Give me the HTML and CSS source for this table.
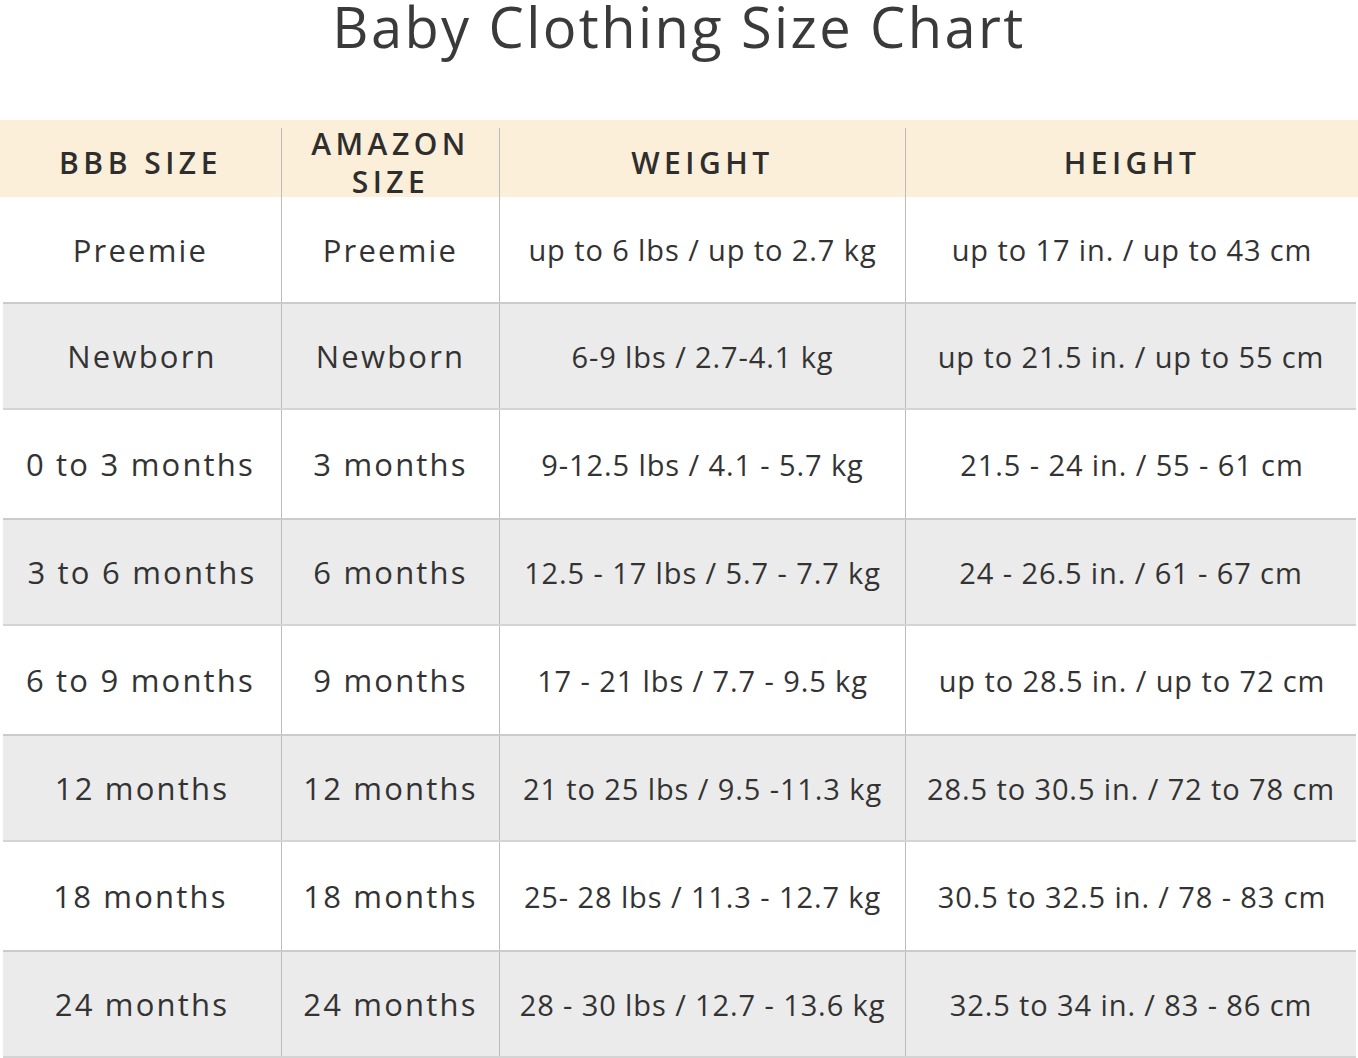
FILE: index.html
```html
<!DOCTYPE html>
<html lang="en">
<head>
<meta charset="utf-8">
<title>Baby Clothing Size Chart</title>
<link rel="stylesheet" href="styles.css">
</head>
<body>
<div class="page">
  <h1 class="title">Baby Clothing Size Chart</h1>
  <div class="chart">
    <div class="row head">
      <div class="cell c1">BBB SIZE</div>
      <div class="cell c2">AMAZON<br>SIZE</div>
      <div class="cell c3">WEIGHT</div>
      <div class="cell c4">HEIGHT</div>
    </div>
    <div class="row first">
      <div class="cell c1 size">Preemie</div>
      <div class="cell c2 size">Preemie</div>
      <div class="cell c3">up to 6 lbs / up to 2.7 kg</div>
      <div class="cell c4">up to 17 in. / up to 43 cm</div>
    </div>
    <div class="row alt">
      <div class="cell c1 size">Newborn</div>
      <div class="cell c2 size">Newborn</div>
      <div class="cell c3">6-9 lbs / 2.7-4.1 kg</div>
      <div class="cell c4">up to 21.5 in. / up to 55 cm</div>
    </div>
    <div class="row">
      <div class="cell c1 size">0 to 3 months</div>
      <div class="cell c2 size">3 months</div>
      <div class="cell c3">9-12.5 lbs / 4.1 - 5.7 kg</div>
      <div class="cell c4">21.5 - 24 in. / 55 - 61 cm</div>
    </div>
    <div class="row alt">
      <div class="cell c1 size">3 to 6 months</div>
      <div class="cell c2 size">6 months</div>
      <div class="cell c3">12.5 - 17 lbs / 5.7 - 7.7 kg</div>
      <div class="cell c4">24 - 26.5 in. / 61 - 67 cm</div>
    </div>
    <div class="row">
      <div class="cell c1 size">6 to 9 months</div>
      <div class="cell c2 size">9 months</div>
      <div class="cell c3">17 - 21 lbs / 7.7 - 9.5 kg</div>
      <div class="cell c4">up to 28.5 in. / up to 72 cm</div>
    </div>
    <div class="row alt">
      <div class="cell c1 size">12 months</div>
      <div class="cell c2 size">12 months</div>
      <div class="cell c3">21 to 25 lbs / 9.5 -11.3 kg</div>
      <div class="cell c4">28.5 to 30.5 in. / 72 to 78 cm</div>
    </div>
    <div class="row">
      <div class="cell c1 size">18 months</div>
      <div class="cell c2 size">18 months</div>
      <div class="cell c3">25- 28 lbs / 11.3 - 12.7 kg</div>
      <div class="cell c4">30.5 to 32.5 in. / 78 - 83 cm</div>
    </div>
    <div class="row alt">
      <div class="cell c1 size">24 months</div>
      <div class="cell c2 size">24 months</div>
      <div class="cell c3">28 - 30 lbs / 12.7 - 13.6 kg</div>
      <div class="cell c4">32.5 to 34 in. / 83 - 86 cm</div>
    </div>
  </div>
</div>
</body>
</html>
```
FILE: styles.css
```css
html, body {
  margin: 0;
  padding: 0;
  background: #ffffff;
}

.page {
  width: 1358px;
  height: 1058px;
  overflow: hidden;
  font-family: "Open Sans", "Liberation Sans", sans-serif;
  color: #333333;
}

.title {
  margin: 0;
  height: 120px;
  box-sizing: border-box;
  padding-top: 4px;
  text-align: center;
  font-size: 56px;
  line-height: 44px;
  font-weight: 400;
  color: #3a3a3a;
  letter-spacing: 2.4px;
}

.chart {
  display: flex;
  flex-direction: column;
}

.row {
  display: grid;
  grid-template-columns: 281px 218px 406px 453px;
  grid-template-rows: 100%;
  height: 108px;
  box-sizing: border-box;
}

.row.first {
  height: 105px;
}

.row.alt {
  background: #ebebeb;
  border-top: 2px solid #cbcbcb;
  border-bottom: 2px solid #d4d4d4;
  margin: 0 2px 0 3px;
  grid-template-columns: 278px 218px 406px 451px;
}

.cell {
  display: flex;
  align-items: center;
  justify-content: center;
  text-align: center;
  font-size: 29px;
  font-weight: 400;
  letter-spacing: 0.9px;
  color: #333333;
  white-space: nowrap;
}

.cell.size {
  font-size: 31px;
  font-weight: 500;
  letter-spacing: 2.2px;
}

.c2, .c3, .c4 {
  border-left: 1px solid #bcbcbc;
}

.row.head {
  height: 77px;
  grid-template-rows: 77px;
  background: #fcefd9;
}

.row.head .cell {
  margin-top: 8px;
  font-size: 30px;
  font-weight: 600;
  letter-spacing: 4.5px;
  line-height: 38px;
  color: #2e2e2e;
}
```
